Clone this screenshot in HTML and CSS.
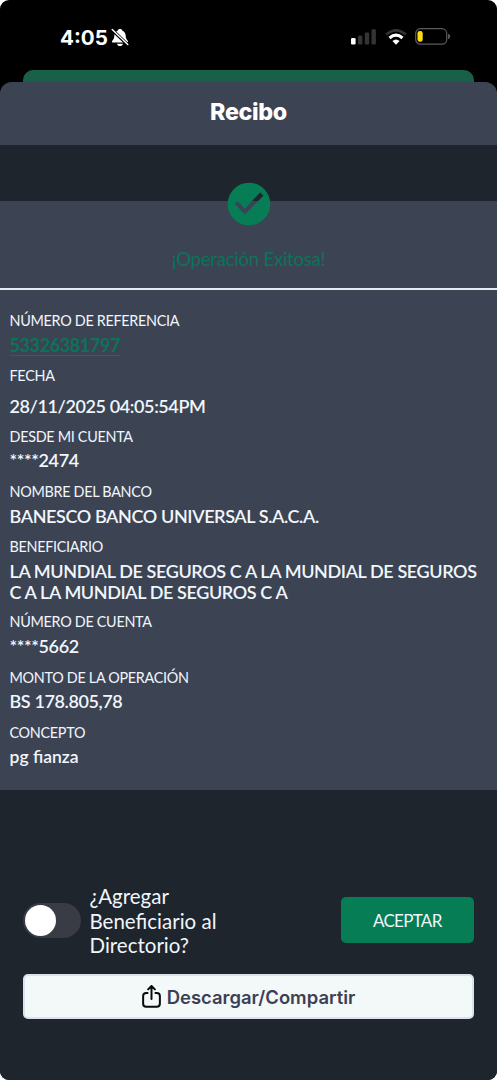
FILE: index.html
```html
<!DOCTYPE html>
<html lang="es">
<head>
<meta charset="utf-8">
<meta name="viewport" content="width=device-width, initial-scale=1">
<title>Recibo</title>
<link rel="stylesheet" href="styles.css">
</head>
<body>
<div class="phone">
  <div class="status">
    <div class="status-left">
      <span class="clock">4:05</span>
      <svg class="bell" width="18" height="19" viewBox="0 0 18 19">
        <path fill="#fff" d="M9 1C10.300 1 11.200 1.700 11.400 2.700C13.600 3.600 14.600 5.400 14.700 7.800C14.800 10.400 15.500 11.400 16.500 12.500C17.400 13.500 17 14.600 15.900 14.600H2.100C1 14.600 .6 13.500 1.500 12.500C2.500 11.400 3.200 10.400 3.300 7.800C3.400 5.400 4.400 3.600 6.600 2.700C6.800 1.700 7.700 1 9 1ZM6 15.700H12C11.700 17.200 10.500 18.100 9 18.100S6.300 17.200 6 15.700Z"/>
        <path stroke="#000" stroke-width="3.200" d="M1 1.700L17 17"/>
        <path stroke="#fff" stroke-width="1.400" stroke-linecap="round" d="M1.200 1.600L16.800 16.600"/>
      </svg>
    </div>
    <div class="status-right">
      <svg width="26" height="16" viewBox="0 0 26 16">
        <rect x="0" y="9" width="4.600" height="6.500" rx="1.200" fill="#fff"/>
        <rect x="7" y="6.500" width="4.400" height="9" rx="1.200" fill="#343436"/>
        <rect x="13.800" y="3.500" width="4.400" height="12" rx="1.200" fill="#343436"/>
        <rect x="20.500" y="0.300" width="4.400" height="15.200" rx="1.200" fill="#343436"/>
      </svg>
      <svg class="wifi" width="22" height="16" viewBox="0 0 22 16" fill="none">
        <path stroke="#343436" stroke-width="2.800" d="M1.300 5.500Q11 -2.800 20.700 5.500"/>
        <path stroke="#fff" stroke-width="3" d="M4.500 9Q11 3.300 17.500 9"/>
        <path fill="#fff" d="M7.400 12Q11 8.900 14.600 12L11 15.700Z"/>
      </svg>
      <svg class="battery" width="36" height="17" viewBox="0 0 36 17">
        <rect x="0.700" y="0.700" width="31" height="15.400" rx="4.700" fill="none" stroke="#5b5b5e" stroke-width="1.200"/>
        <rect x="2.500" y="3" width="5.200" height="10.800" rx="2.300" fill="#ffdc0a"/>
        <path fill="#5b5b5e" d="M33 5.700Q35.200 6.300 35.200 8.400T33 11.100Z"/>
      </svg>
    </div>
  </div>
  <div class="behind"></div>
  <div class="sheet">
    <header class="title">Recibo</header>
    <section class="receipt">
      <div class="result">
        <svg class="check" width="44" height="44" viewBox="0 0 44 44">
          <path fill="#067d55" fill-rule="evenodd" d="M22 .7A21.300 21.300 0 1 0 22 43.300A21.300 21.300 0 1 0 22 .7ZM7.800 22L10.800 19.200L17.800 26.800L33 10.600L36.600 13.500L17.800 32.500Z"/>
        </svg>
        <p class="success">¡Operación Exitosa!</p>
      </div>
      <dl class="fields">
        <div class="field"><dt>NÚMERO DE REFERENCIA</dt><dd class="reference">53326381797</dd></div>
        <div class="field date"><dt>FECHA</dt><dd>28/11/2025 04:05:54PM</dd></div>
        <div class="field"><dt>DESDE MI CUENTA</dt><dd>****2474</dd></div>
        <div class="field"><dt>NOMBRE DEL BANCO</dt><dd>BANESCO BANCO UNIVERSAL S.A.C.A.</dd></div>
        <div class="field"><dt>BENEFICIARIO</dt><dd>LA MUNDIAL DE SEGUROS C A LA MUNDIAL DE SEGUROS<br>C A LA MUNDIAL DE SEGUROS C A</dd></div>
        <div class="field"><dt>NÚMERO DE CUENTA</dt><dd>****5662</dd></div>
        <div class="field"><dt>MONTO DE LA OPERACIÓN</dt><dd>BS 178.805,78</dd></div>
        <div class="field"><dt>CONCEPTO</dt><dd class="concept">pg fianza</dd></div>
      </dl>
    </section>
    <footer class="actions">
      <div class="directory">
        <span class="switch"><span class="knob"></span></span>
        <span class="question">¿Agregar<br>Beneficiario al<br>Directorio?</span>
        <button class="accept">ACEPTAR</button>
      </div>
      <button class="share">
        <svg width="19" height="23" viewBox="0 0 18 22" fill="none" stroke="#08090c" stroke-width="1.900" stroke-linecap="round" stroke-linejoin="round">
          <path d="M5.200 7.600H4Q1 7.600 1 10.600V17.900Q1 20.900 4 20.900H14Q17 20.900 17 17.900V10.600Q17 7.600 14 7.600H12.800M9 13.500V1.200M5.800 4.200L9 1L12.200 4.200"/>
        </svg>
        <span>Descargar/Compartir</span>
      </button>
    </footer>
  </div>
</div>
</body>
</html>
```
FILE: styles.css
```css
* { box-sizing: border-box; }
body { margin: 0; background: #fff; }
.phone {
  width: 497px;
  height: 1080px;
  display: flex;
  flex-direction: column;
  overflow: hidden;
  border-radius: 9px;
  background: #000;
  color: #f1f6fc;
  font-family: Lato, "Liberation Sans", sans-serif;
}
.status {
  height: 70px;
  display: flex;
  justify-content: space-between;
  padding: 0 46px 0 60px;
  flex: none;
}
.status-left { display: flex; padding-top: 26px; }
.clock { font: 700 20.600px/24px Inter, sans-serif; color: #fff; width: 51px; white-space: nowrap; }
.bell { margin-top: 2px; }
.status-right { display: flex; padding-top: 29px; }
.wifi { margin-left: 8px; }
.battery { margin-left: 8px; margin-top: -1px; }
.behind {
  flex: none;
  height: 12px;
  margin: 0 23px;
  border-radius: 10px 10px 0 0;
  background: #186048;
}
.sheet {
  flex: 1;
  display: flex;
  flex-direction: column;
  background: #1f252d;
  border-radius: 12px 12px 0 0;
}
.title {
  height: 63px;
  text-align: center;
  font: 800 23.300px/60px Inter, sans-serif;
  letter-spacing: -0.350px;
  color: #fff;
  background: #3c4454;
  border-radius: 12px 12px 0 0;
}
.receipt { margin-top: 56px; height: 589px; background: #3c4454; }
.result {
  height: 88.500px;
  display: flex;
  flex-direction: column;
  align-items: center;
  border-bottom: 2px solid #e4ebf2;
}
.check { flex: none; margin-top: -19px; }
.success { margin: 19.500px 0 0; font-size: 18.700px; line-height: 26px; letter-spacing: -0.300px; color: #0b735a; }
.fields { margin: 0; padding: 22.600px 9.500px 0; }
.field { height: 55.200px; }
.field:nth-child(2) { height: 60.400px; }
.field:nth-child(5) { height: 75.400px; }
dt { font-size: 14.400px; line-height: 18px; letter-spacing: -0.300px; }
dd {
  margin: 4.800px 0 0;
  font-size: 18px;
  line-height: 20.800px;
  font-weight: 600;
  letter-spacing: -0.390px;
  white-space: nowrap;
}
.date dd { margin-top: 10.400px; }
.concept { font-size: 17.500px; letter-spacing: 0; }
.reference { color: #0b735a; font-weight: 700; text-decoration: underline; text-decoration-thickness: 1px; text-underline-offset: 3px; }
.actions { padding: 93px 23px 0; }
.directory { display: flex; align-items: center; height: 74px; }
.switch { width: 58px; height: 35px; padding: 2px; border-radius: 18px; background: #393c44; }
.knob { display: block; width: 31px; height: 31px; border-radius: 50%; background: #fff; }
.question { margin: 2px 0 0 8.500px; font-size: 20.500px; line-height: 24.500px; }
.accept {
  margin-left: auto;
  width: 133.500px;
  height: 46px;
  padding: 2px 0 0;
  border: 0;
  border-radius: 5px;
  background: #067d55;
  color: #f1f6fc;
  font: 400 17px/44px Lato, sans-serif;
  letter-spacing: -0.700px;
}
.share {
  display: flex;
  align-items: center;
  justify-content: center;
  gap: 6px;
  width: 451px;
  height: 45px;
  margin-top: 17px;
  padding: 0;
  border: 2px solid #dbe2ec;
  border-radius: 5px;
  background: #f3f8f8;
  color: #3c4054;
  font: 600 18.450px/24px Inter, sans-serif;
}
```
